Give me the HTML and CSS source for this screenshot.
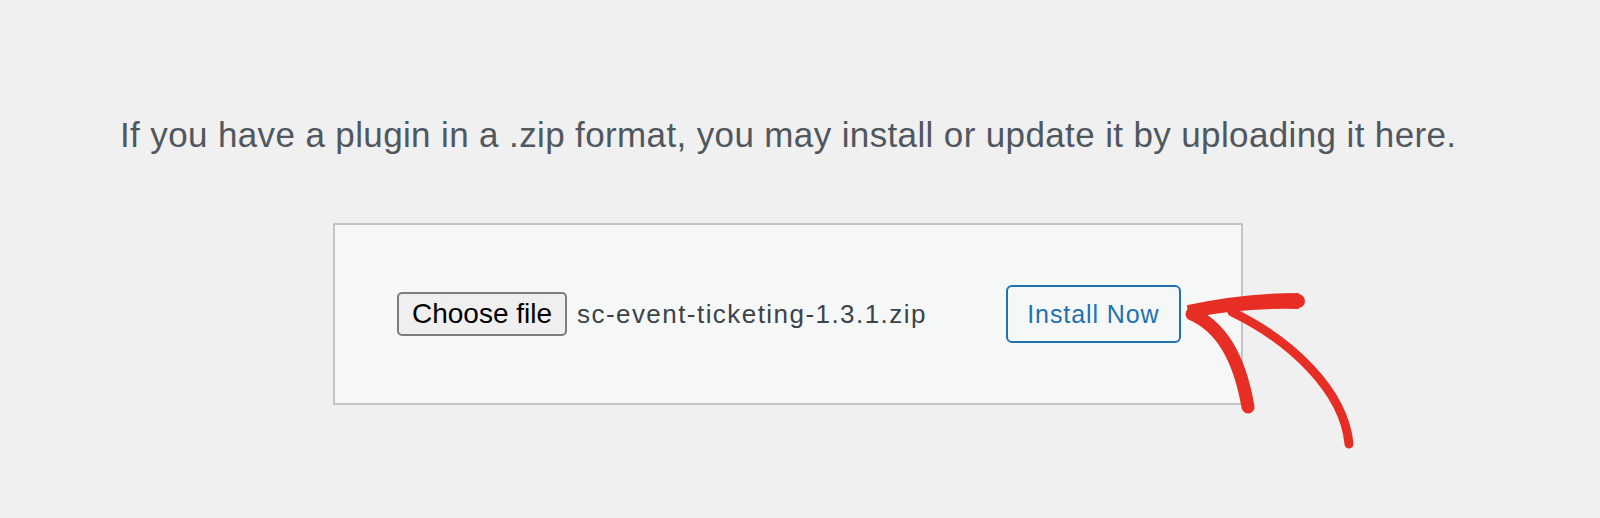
FILE: index.html
```html
<!DOCTYPE html>
<html lang="en">
<head>
    <meta charset="UTF-8" />
    <title>Upload Plugin</title>
    <link rel="stylesheet" href="styles.css">
</head>
<body>

<main class="upload-page">
    <p class="upload-help">If you have a plugin in a .zip format, you may install or update it by uploading it here.</p>

    <!-- Upload box -->
    <form class="upload-form">
        <button type="button" class="file-btn">Choose file</button>
        <span class="file-name">sc-event-ticketing-1.3.1.zip</span>
        <button type="button" class="install-btn">Install Now</button>
    </form>
</main>

<!-- Hand drawn arrow pointing at the button -->
<svg class="annotation" width="1600" height="518" viewBox="0 0 1600 518">
    <g stroke="#e62e24" stroke-linecap="round" stroke-linejoin="round">
        <path d="M1188 306 C1225 298, 1262 294, 1298 294 L1298 308 C1262 307, 1225 310, 1190 317 Z" fill="#e62e24" stroke-width="2"/>
        <circle cx="1298" cy="301" r="7" fill="#e62e24" stroke="none"/>
        <path d="M1192 314 C1222 327, 1240 360, 1248 407" stroke-width="13" fill="none"/>
        <path d="M1232 312 C1290 340, 1344 390, 1349 444" stroke-width="9" fill="none"/>
    </g>
</svg>

</body>
</html>
```

FILE: styles.css
```css
body {
    margin: 0;
    background-color: #f0f0f1;
    font-family: "Liberation Sans", Arial, sans-serif;
}

.upload-page {
    padding: 110px 0 0 120px;
}

.upload-help {
    margin: 0;
    font-size: 35px;
    line-height: 50px;
    letter-spacing: 0.37px;
    color: #50575e;
}

.upload-form {
    display: flex;
    align-items: center;
    box-sizing: border-box;
    width: 910px;
    height: 182px;
    margin: 63px 0 0 213px;
    padding-left: 62px;
    background-color: #f6f7f7;
    border: 2px solid #c3c4c7;
}

.file-btn {
    box-sizing: border-box;
    width: 170px;
    height: 44px;
    padding: 0;
    font-family: "Liberation Sans", Arial, sans-serif;
    font-size: 28px;
    color: #000;
    background-color: #efefef;
    border: 2px solid #7d7d7d;
    border-radius: 5px;
}

.file-name {
    margin-left: 10px;
    font-size: 26px;
    letter-spacing: 1.45px;
    color: #3c434a;
}

.install-btn {
    box-sizing: border-box;
    width: 175px;
    height: 58px;
    margin-left: 79px;
    padding: 0;
    font-family: "Liberation Sans", Arial, sans-serif;
    font-size: 25px;
    letter-spacing: 0.9px;
    color: #2271b1;
    background-color: #f6f7f7;
    border: 2px solid #2271b1;
    border-radius: 6px;
}

.annotation {
    position: absolute;
    top: 0;
    left: 0;
    pointer-events: none;
}
```
